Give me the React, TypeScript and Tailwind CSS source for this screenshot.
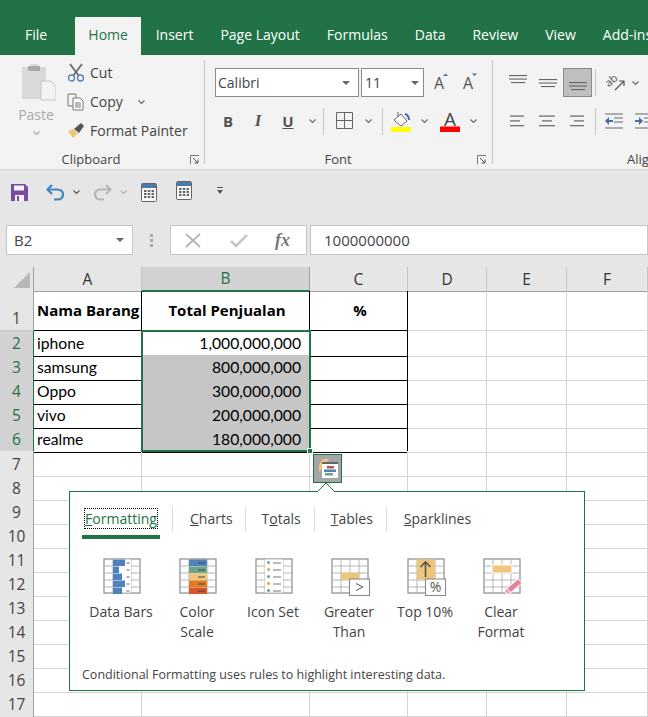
import type { ReactNode } from 'react'

const tabs = ['Insert', 'Page Layout', 'Formulas', 'Data', 'Review', 'View', 'Add-ins']

const dataRows = [
  { name: 'iphone', total: '1,000,000,000' },
  { name: 'samsung', total: '800,000,000' },
  { name: 'Oppo', total: '300,000,000' },
  { name: 'vivo', total: '200,000,000' },
  { name: 'realme', total: '180,000,000' },
]

// row 18 is only a sliver at the bottom of the window, so its number stays empty
const emptyRows = ['7', '8', '9', '10', '11', '12', '13', '14', '15', '16', '17', '']

const Chevron = ({ className = 'text-[#666]' }: { className?: string }) => (
  <svg width="9" height="6" viewBox="0 0 9 6" className={className}>
    <path d="M1.5 1.5 4.5 4.5 7.5 1.5" fill="none" stroke="currentColor" strokeWidth="1.1" />
  </svg>
)

const Caret = () => (
  <svg width="8" height="4" viewBox="0 0 8 4">
    <path d="M0 0h8L4 4z" fill="#666" />
  </svg>
)

const Launcher = () => (
  <svg width="10" height="10" viewBox="0 0 10 10">
    <path d="M.5 9V.5H9" fill="none" stroke="#777" />
    <path d="M3 3l5 5M8 4.5V8H4.500" fill="none" stroke="#555" />
  </svg>
)

const Separator = () => <div className="my-[5px] w-px shrink-0 bg-[#c6c6c6]" />
const ToolSeparator = ({ className }: { className: string }) => <div className={`h-[27px] w-px bg-[#c6c6c6] ${className}`} />

// horizontal alignment glyph, three lines
const Lines = ({ widths, align }: { widths: number[]; align: 'left' | 'center' | 'right' }) => (
  <svg width="20" height="14" viewBox="0 0 20 14" className="mt-[-1px]">
    {widths.map((w, i) => (
      <rect key={i} x={align === 'left' ? 0 : align === 'center' ? (20 - w) / 2 : 20 - w} y={1.500 + i * 4.800} width={w} height="1.2" fill="#666" />
    ))}
  </svg>
)

// vertical alignment glyph, y is the top line
const VAlign = ({ y }: { y: number }) => (
  <svg width="20" height="20" viewBox="0 0 20 20">
    {[0, 1, 2].map((i) => (
      <rect key={i} x={i === 2 ? 3 : 1} y={y + i * 3.500} width={i === 2 ? 14 : 18} height="1.1" fill="#666" />
    ))}
  </svg>
)

const GridIcon = ({ children }: { children?: ReactNode }) => (
  <svg width="42" height="40" viewBox="0 0 42 40">
    <rect x="1" y="1" width="36" height="34" fill="#fff" stroke="#8a8a8a" strokeWidth="1.2" />
    {[8, 15, 22, 29].map((y) => (
      <path key={y} d={`M1 ${y}H37`} stroke="#b5b5b5" />
    ))}
    <path d="M10 1V35M19 1V35M28 1V35" stroke="#b5b5b5" />
    {children}
  </svg>
)

const Overlay = ({ children }: { children: ReactNode }) => (
  <g>
    <rect x="18.500" y="21" width="20" height="16.500" fill="#fff" stroke="#8a8a8a" strokeWidth="1.1" />
    {children}
  </g>
)

function DataBarsIcon() {
  return (
    <GridIcon>
      <rect x="10" y="1.500" width="18" height="33" fill="#fff" />
      {[12, 6, 9, 12, 9].map((w, i) => (
        <g key={i}>
          <rect x="10" y={1.500 + i * 7} width={w} height="6.500" fill="#4f81bd" />
          <path d={`M23.500 ${5 + i * 7}h3`} stroke="#666" />
        </g>
      ))}
    </GridIcon>
  )
}

function ColorScaleIcon() {
  return (
    <GridIcon>
      {['#4f81bd', '#6aa68a', '#eec67a', '#e47b1c', '#d9552b'].map((c, i) => (
        <g key={c}>
          <rect x="10" y={1.500 + i * 7} width="18" height="6.500" fill={c} />
          <path d={`M19 ${5 + i * 7}h7`} stroke="#444" />
        </g>
      ))}
    </GridIcon>
  )
}

function IconSetIcon() {
  return (
    <GridIcon>
      <rect x="10" y="1.500" width="18" height="33" fill="#fff" />
      {['#6aa68a', '#e89a4a', '#6aa68a', '#e89a4a', '#6aa68a'].map((c, i) => (
        <g key={i}>
          <circle cx="13.500" cy={4.500 + i * 7} r="1.500" fill={c} />
          <path d={`M18 ${5 + i * 7}h8`} stroke="#777" />
        </g>
      ))}
    </GridIcon>
  )
}

function GreaterIcon() {
  return (
    <GridIcon>
      <rect x="10" y="15" width="18" height="6.500" fill="#eec67a" />
      <Overlay>
        <path d="M25 25.500l7 3.500-7 3.500" fill="none" stroke="#555" />
      </Overlay>
    </GridIcon>
  )
}

function TopIcon() {
  return (
    <GridIcon>
      <rect x="10" y="1.500" width="18" height="20" fill="#eec67a" />
      <path d="M18.500 19V4M13.500 9l5-5 5 5" fill="none" stroke="#555" strokeWidth="1.6" />
      <Overlay>
        <text x="28.500" y="34" textAnchor="middle" fontSize="14" fill="#555" fontFamily="'Open Sans', sans-serif">%</text>
      </Overlay>
    </GridIcon>
  )
}

function ClearIcon() {
  return (
    <GridIcon>
      <rect x="9" y="7" width="20" height="8" fill="#eec67a" stroke="#fff" />
      <path d="M22 32l13-11 4 4-13 11z" fill="#e8829b" stroke="#fff" />
      <path d="M21 33l3-2.500 4 4-3 2z" fill="#e8a5b5" stroke="#fff" />
    </GridIcon>
  )
}

const quickItems = [
  { label: ['Data Bars'], icon: <DataBarsIcon /> },
  { label: ['Color', 'Scale'], icon: <ColorScaleIcon /> },
  { label: ['Icon Set'], icon: <IconSetIcon /> },
  { label: ['Greater', 'Than'], icon: <GreaterIcon /> },
  { label: ['Top 10%'], icon: <TopIcon /> },
  { label: ['Clear', 'Format'], icon: <ClearIcon /> },
]

function QuickAnalysis() {
  return (
    <>
      <div className="absolute left-[313px] top-[187px] flex h-[29px] w-[29px] items-center justify-center border border-[#217346] bg-[#a6a6a6]">
        <svg width="22" height="22" viewBox="0 0 22 22">
          <path d="M6 1h6L2 14V7z" fill="#eec67a" />
          <rect x="5" y="5" width="16" height="15" fill="#fff" />
          <rect x="5" y="4" width="16" height="2" fill="#666" />
          <rect x="10" y="8" width="7" height="2.500" fill="#c0504d" />
          <rect x="7" y="11.500" width="12" height="2.500" fill="#4f81bd" />
          <rect x="8" y="15" width="8" height="2.500" fill="#6aa68a" />
        </svg>
      </div>
      <div className="absolute left-[69px] top-[224px] h-[200px] w-[516px] border border-[#217346] bg-white font-['Open_Sans',sans-serif] text-[#444]">
        <svg width="20" height="10" viewBox="0 0 20 10" className="absolute left-[246px] top-[-10px]">
          <path d="M1 10 10 1l9 9" fill="#fff" stroke="#217346" />
        </svg>
        <div className="flex h-[47px] items-start pt-[14px] pl-[12px] text-[14px] leading-[26px]">
          <div className="relative mr-[12px] w-[78px] text-center text-[#217346]">
            <span className="outline-1 outline-dotted outline-black">
              <u>F</u>ormatting
            </span>
            <div className="absolute top-[29px] left-0 h-[4px] w-[78px] bg-[#217346]" />
          </div>
          <div className="flex items-center border-l border-[#ddd] pl-[17px] pr-[12px]">
            <span>
              <u>C</u>harts
            </span>
          </div>
          <div className="flex items-center border-l border-[#ddd] pl-[16px] pr-[13px]">
            <span>
              T<u>o</u>tals
            </span>
          </div>
          <div className="flex items-center border-l border-[#ddd] pl-[16px] pr-[13px]">
            <span>
              <u>T</u>ables
            </span>
          </div>
          <div className="flex items-center border-l border-[#ddd] pl-[17px]">
            <span>
              <u>S</u>parklines
            </span>
          </div>
        </div>
        <div className="flex pl-[13px] pt-[19px]">
          {quickItems.map((item) => (
            <div key={item.label[0]} className="flex w-[76px] flex-col items-center">
              <div className="h-[40px] w-[37px]">{item.icon}</div>
              <div className="mt-[4px] text-center text-[14px] leading-[20px]">
                {item.label.map((line) => (
                  <div key={line}>{line}</div>
                ))}
              </div>
            </div>
          ))}
        </div>
        <div className="absolute bottom-[6px] left-[12px] text-[12.500px] leading-[18px]">
          Conditional Formatting uses rules to highlight interesting data.
        </div>
      </div>
    </>
  )
}

function Sheet() {
  const colClass = 'grid grid-cols-[34px_108px_168px_98px_79px_80px_81px]'
  const rowHead = 'flex justify-center border-r border-b border-r-[#9f9f9f] border-b-[#c6c6c6] bg-[#e6e6e6] text-[#444]'
  const plain = 'border-r border-b border-[#d4d4d4]'
  const boxed = 'flex items-center border-r border-b border-black pl-[3px] text-black'
  const colHead = 'flex items-center justify-center border-r border-b border-r-[#c6c6c6] border-b-[#9f9f9f] bg-[#e6e6e6] text-[#333]'
  const heading = "font-['Open_Sans',sans-serif] text-[15px] font-bold"
  return (
    <div className="relative bg-white font-['Open_Sans',sans-serif] text-[15.500px]">
      <div className={`${colClass} h-[24px]`}>
        <div className="flex items-end justify-end border-r border-b border-[#9f9f9f] bg-[#e6e6e6] p-[3px]">
          <svg width="16" height="16" viewBox="0 0 16 16">
            <path d="M16 0v16H0z" fill="#b7b7b7" />
          </svg>
        </div>
        <div className={colHead}>A</div>
        <div className="flex items-center justify-center border-r border-b-2 border-r-[#9f9f9f] border-b-[#217346] bg-[#d2d2d2] text-[#217346]">B</div>
        <div className={colHead}>C</div>
        <div className={colHead}>D</div>
        <div className={colHead}>E</div>
        <div className={colHead}>F</div>
      </div>
      <div className={`${colClass} h-[40px]`}>
        <div className={`${rowHead} items-end`}>1</div>
        <div className={`${boxed} ${heading}`}>Nama Barang</div>
        <div className={`${boxed} justify-center pl-0 ${heading}`}>Total Penjualan</div>
        <div className={`${boxed} justify-center pl-0 ${heading}`}>%</div>
        <div className={plain} />
        <div className={plain} />
        <div className={plain} />
      </div>
      {dataRows.map((row, i) => (
        <div key={row.name} className={`${colClass} h-[24px] font-['Lato',sans-serif] text-[15.700px]`}>
          <div className="flex items-center justify-center border-r border-b border-r-[#217346] border-b-[#b5b5b5] bg-[#d2d2d2] pt-[1px] font-['Open_Sans',sans-serif] text-[15.500px] text-[#217346]">{i + 2}</div>
          <div className={`${boxed} pt-[1px]`}>{row.name}</div>
          <div className={`${boxed} justify-end pr-[8px] pt-[1px] ${i === 0 ? 'bg-white' : 'bg-[#c6c6c6]'}`}>{row.total}</div>
          <div className={boxed} />
          <div className={plain} />
          <div className={plain} />
          <div className={plain} />
        </div>
      ))}
      {emptyRows.map((n, i) => (
        <div key={i} className={`${colClass} h-[24px]`}>
          <div className={`${rowHead} items-center pt-[2px]`}>{n}</div>
          <div className={plain} />
          <div className={plain} />
          <div className={plain} />
          <div className={plain} />
          <div className={plain} />
          <div className={plain} />
        </div>
      ))}
      <div className="pointer-events-none absolute left-[141px] top-[63px] h-[122px] w-[170px] border-2 border-[#217346]">
        <div className="absolute right-[-4px] bottom-[-4px] h-[6px] w-[6px] border border-white bg-[#217346]" />
      </div>
      <QuickAnalysis />
    </div>
  )
}

export default function App() {
  return (
    <div className="h-[717px] w-[648px] overflow-hidden bg-[#e6e6e6] font-['Open_Sans',sans-serif]">
      <div className="flex h-[55px] items-end overflow-hidden whitespace-nowrap bg-[#217346] pl-[12px] text-[14px] text-white">
        <div className="flex h-[38px] shrink-0 items-center px-[13px] pb-[3px]">File</div>
        <div className="ml-[15px] mr-[1px] flex h-[38px] w-[66px] shrink-0 items-center justify-center bg-[#f3f3f3] pb-[3px] text-[#217346]">Home</div>
        {tabs.map((t) => (
          <div key={t} className="flex h-[38px] shrink-0 items-center px-[13.500px] pb-[3px]">{t}</div>
        ))}
      </div>

      <div className="flex h-[115px] overflow-hidden whitespace-nowrap border-b border-[#d4d4d4] bg-[#f3f3f3] text-[14px] text-[#444]">
        <div className="flex w-[204px] shrink-0 flex-col">
          <div className="flex flex-1 pl-[19px]">
            <div className="flex w-[34px] flex-col items-center pt-[8px] text-[#aaa]">
              <svg width="34" height="38" viewBox="0 0 34 38" className="ml-[6px]">
                <path d="M0 4h8V1h8v3h8v32H0z" fill="#d9d9d9" />
                <rect x="6" y="3" width="12" height="5" fill="#aaa" />
                <path d="M19 18h10l5 5v14H19z" fill="#f3f3f3" stroke="#c6c6c6" />
              </svg>
              <div className="mt-[4px] leading-[20px]">Paste</div>
              <Chevron className="mt-[5px] text-[#aaa]" />
            </div>
            <div className="ml-[14px] flex flex-col pt-[3px]">
              <div className="flex h-[29px] items-center">
                <svg width="18" height="19" viewBox="0 0 18 19" className="mr-[5px]">
                  <path d="M3 1l9 12M15 1 6 13" stroke="#666" strokeWidth="1.700" fill="none" />
                  <circle cx="4.500" cy="15" r="3" fill="none" stroke="#4f81bd" strokeWidth="1.300" />
                  <circle cx="13.500" cy="15" r="3" fill="none" stroke="#4f81bd" strokeWidth="1.300" />
                </svg>
                Cut
              </div>
              <div className="flex h-[29px] items-center">
                <svg width="18" height="18" viewBox="0 0 18 18" className="mr-[5px]">
                  <path d="M1 1h8v4M1 1v12h5" fill="none" stroke="#777" />
                  <path d="M6 5h7l3 3v9H6z" fill="#fff" stroke="#777" />
                  <path d="M8 10h6M8 12h6M8 14h6" stroke="#777" />
                </svg>
                Copy
                <Chevron className="ml-[14px] text-[#666]" />
              </div>
              <div className="flex h-[29px] items-center">
                <svg width="18" height="18" viewBox="0 0 18 18" className="mr-[5px]">
                  <path d="M1 9l5 7 5-5-5-4z" fill="#eec67a" />
                  <path d="M7 7l5 4 5-7-3-3z" fill="#555" />
                </svg>
                Format Painter
              </div>
            </div>
          </div>
          <div className="flex h-[20px] items-center pt-[1px]">
            <div className="flex-1 pr-[8px] text-center text-[13px]">Clipboard</div>
            <div className="pr-[4px]"><Launcher /></div>
          </div>
        </div>
        <Separator />

        <div className="flex w-[287px] shrink-0 flex-col">
          <div className="flex h-[29px] items-center pl-[10px] mt-[13px]">
            <div className="flex h-[29px] w-[144px] items-center justify-between border border-[#8a8a8a] bg-white pl-[2px] pr-[8px]">
              Calibri
              <Caret />
            </div>
            <div className="ml-[2px] flex h-[29px] w-[63px] items-center justify-between border border-[#8a8a8a] bg-white pl-[3px] pr-[4px]">
              11
              <Caret />
            </div>
            <svg width="20" height="20" viewBox="0 0 20 20" className="ml-[10px]">
              <text x="0" y="15.500" fontSize="16" fill="#555" fontFamily="'Open Sans', sans-serif">A</text>
              <path d="M9 3l2.500-2.500L14 3z" fill="#3f6fa8" />
            </svg>
            <svg width="20" height="20" viewBox="0 0 20 20" className="ml-[9px]">
              <text x="0" y="15.500" fontSize="16" fill="#555" fontFamily="'Open Sans', sans-serif">A</text>
              <path d="M9 .5l2.500 2.500L14 .5z" fill="#3f6fa8" />
            </svg>
          </div>
          <div className="mt-[7px] flex h-[34px] items-center pl-[13px] text-[15px]">
            <span className="w-[20px] text-center font-bold text-[#555]">B</span>
            <span className="ml-[10px] w-[20px] text-center font-['Liberation_Serif',serif] text-[17px] font-bold italic text-[#555]">I</span>
            <span className="ml-[10px] w-[20px] text-center font-bold text-[#555] underline">U</span>
            <Chevron className="ml-[10px] text-[#666]" />
            <ToolSeparator className="ml-[6px]" />
            <svg width="18" height="18" viewBox="0 0 18 18" className="ml-[12px]">
              <path d="M.5.5h16v16H.5zM8.500.5v16M.5 8.500h16" fill="none" stroke="#666" />
            </svg>
            <Chevron className="ml-[10px] text-[#666]" />
            <ToolSeparator className="ml-[9px]" />
            <svg width="22" height="21" viewBox="0 0 22 21" className="ml-[8px]">
              <path d="M3 9l7-6 6 7-6 5z" fill="#fff" stroke="#666" />
              <path d="M7 1v5" stroke="#666" />
              <path d="M14 3c3 1 4 3 4 6" fill="none" stroke="#3f6fa8" strokeWidth="2" />
              <rect x="0" y="16" width="20" height="5" fill="#ffff00" />
            </svg>
            <Chevron className="ml-[7px] text-[#666]" />
            <svg width="20" height="21" viewBox="0 0 20 21" className="ml-[11px] overflow-visible">
              <text x="10" y="15" textAnchor="middle" fontSize="19" fill="#444" fontFamily="'Open Sans', sans-serif">A</text>
              <rect x="0" y="15.500" width="20" height="5.500" fill="#ff0000" />
            </svg>
            <Chevron className="ml-[9px] text-[#666]" />
          </div>
          <div className="mt-auto flex h-[20px] items-center pt-[1px]">
            <div className="flex-1 pr-[6px] text-center text-[13px]">Font</div>
            <div className="pr-[5px]"><Launcher /></div>
          </div>
        </div>
        <Separator />

        <div className="flex flex-1 flex-col">
          <div className="mt-[13px] flex h-[29px] items-center pl-[15px]">
            <div className="w-[24px]"><VAlign y={2} /></div>
            <div className="ml-[6px] w-[24px]"><VAlign y={6} /></div>
            <div className="ml-[1px] flex h-[29px] w-[29px] items-center justify-center border border-[#8a8a8a] bg-[#bfbfbf]">
              <VAlign y={9} />
            </div>
            <ToolSeparator className="ml-[3px]" />
            <svg width="20" height="20" viewBox="0 0 20 20" className="ml-[9px] overflow-visible">
              <text x="1" y="11" fontSize="11" fill="#555" transform="rotate(-40 7 9)" fontFamily="'Open Sans', sans-serif">ab</text>
              <path d="M10 17 19 8M14 8h5v5" fill="none" stroke="#555" strokeWidth="1.200" />
            </svg>
            <Chevron className="ml-[6px] text-[#666]" />
          </div>
          <div className="mt-[7px] flex h-[34px] items-center pl-[17px]">
            <Lines widths={[14, 10, 14]} align="left" />
            <div className="ml-[7px] flex"><Lines widths={[16, 10, 16]} align="center" /></div>
            <div className="ml-[7px] flex"><Lines widths={[14, 10, 14]} align="right" /></div>
            <ToolSeparator className="ml-[11px]" />
            <svg width="20" height="17" viewBox="0 0 20 17" className="ml-[9px]">
              <path d="M0 1h18M9 5h9M9 9h9M0 15h18" stroke="#666" />
              <path d="M0 8l4-4v3h4v2H4v3z" fill="#3f6fa8" />
            </svg>
            <svg width="20" height="17" viewBox="0 0 20 17" className="ml-[10px]">
              <path d="M0 1h18M9 5h9M9 9h9M0 15h18" stroke="#666" />
              <path d="M8 8 4 4v3H0v2h4v3z" fill="#3f6fa8" />
            </svg>
          </div>
          <div className="mt-auto flex h-[20px] items-center pl-[134px] pt-[1px] text-[13px]">Alignment</div>
        </div>
      </div>

      <div className="flex h-[55px] items-start pl-[11px] pt-[11px]">
        <svg width="17" height="17" viewBox="0 0 17 17" className="mt-[3px]">
          <path d="M0 0h14l3 3v14H0z" fill="#7a4c9f" />
          <rect x="3" y="1.500" width="10" height="5" fill="#f3f3f3" />
          <rect x="4" y="11" width="9" height="6" fill="#f3f3f3" />
          <rect x="6" y="12" width="2" height="5" fill="#7a4c9f" />
        </svg>
        <svg width="20" height="17" viewBox="0 0 20 17" className="ml-[18px] mt-[3px]">
          <path d="M6 1 1.500 5.500 6 10" fill="none" stroke="#3f84c4" strokeWidth="2.200" />
          <path d="M2 5.500h9c4 0 6 2 6 5s-2 5-6 5H8" fill="none" stroke="#3f84c4" strokeWidth="2.200" />
        </svg>
        <Chevron className="ml-[6px] mt-[8px] text-[#555]" />
        <svg width="20" height="17" viewBox="0 0 20 17" className="ml-[11px] mt-[3px]">
          <path d="M14 1l4.500 4.500L14 10" fill="none" stroke="#b5b5b5" strokeWidth="2.200" />
          <path d="M18 5.500H9c-4 0-6 2-6 5s2 5 6 5h3" fill="none" stroke="#b5b5b5" strokeWidth="2.200" />
        </svg>
        <Chevron className="ml-[7px] mt-[8px] text-[#b5b5b5]" />
        <svg width="16" height="19" viewBox="0 0 16 19" className="ml-[13px] mt-[2px]">
          <rect x=".5" y=".5" width="15" height="18" rx="1" fill="#f8f8f8" stroke="#666" />
          <rect x="1" y="1" width="14" height="4" fill="#4a7ba8" />
          <path d="M3 8h10M3 11h10M3 14h10" stroke="#666" strokeWidth="2" strokeDasharray="2.500 1.300" />
        </svg>
        <svg width="16" height="19" viewBox="0 0 16 19" className="ml-[19px]">
          <rect x=".5" y=".5" width="15" height="18" rx="1" fill="#f8f8f8" stroke="#666" />
          <rect x="1" y="1" width="14" height="4" fill="#4a7ba8" />
          <path d="M3 8h10M3 11h10M3 14h10" stroke="#666" strokeWidth="2" strokeDasharray="2.500 1.300" />
        </svg>
        <svg width="6" height="7" viewBox="0 0 6 7" className="ml-[25px] mt-[6px]">
          <path d="M0 0h6v1H0zM0 3h6L3 7z" fill="#555" />
        </svg>
      </div>

      <div className="flex h-[30px] items-stretch pl-[6px] text-[15px] text-[#444]">
        <div className="flex w-[127px] items-center justify-between border border-[#c6c6c6] bg-white pl-[7px] pr-[8px]">
          B2
          <Caret />
        </div>
        <div className="flex w-[37px] flex-col items-center justify-center gap-[2px]">
          <div className="h-[3px] w-[3px] bg-[#aaa]" />
          <div className="h-[3px] w-[3px] bg-[#aaa]" />
          <div className="h-[3px] w-[3px] bg-[#aaa]" />
        </div>
        <div className="flex w-[137px] items-center border border-[#c6c6c6] bg-white pl-[14px]">
          <svg width="17" height="15" viewBox="0 0 17 15">
            <path d="M1 1l14 13M15 1 1 14" stroke="#b5b5b5" strokeWidth="1.800" />
          </svg>
          <svg width="18" height="15" viewBox="0 0 18 15" className="ml-[28px]">
            <path d="M1 8l5 5L17 2" fill="none" stroke="#c6c6c6" strokeWidth="2.500" />
          </svg>
          <span className="ml-[27px] font-['Liberation_Serif',serif] text-[18px] font-bold italic text-[#777]">fx</span>
        </div>
        <div className="ml-[3px] flex flex-1 items-center border border-[#c6c6c6] bg-white pl-[13px]">1000000000</div>
      </div>

      <div className="h-[12px]" />
      <Sheet />
    </div>
  )
}
